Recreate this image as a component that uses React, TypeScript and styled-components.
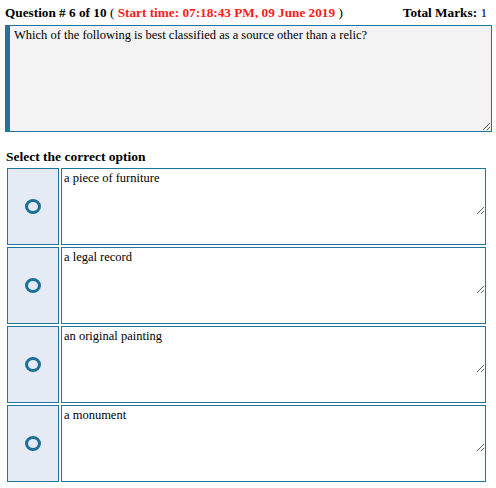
import React from "react";
import styled, { createGlobalStyle } from "styled-components";

const Global = createGlobalStyle`
  html, body { margin: 0; padding: 0; background: #ffffff; }
  body { font-family: "Liberation Serif", "Times New Roman", serif; color: #000; }
`;

const Page = styled.div`
  width: 496px;
  height: 488px;
  box-sizing: border-box;
  padding: 4px 4px 0 5px;
  display: flex;
  flex-direction: column;
`;

const HeaderRow = styled.div`
  display: flex;
  justify-content: space-between;
  align-items: baseline;
  font-weight: bold;
  font-size: 13.25px;
  line-height: 17px;
  height: 17px;
  padding-right: 5px;
  margin-bottom: 4px;
`;

const Red = styled.span`
  color: #ff1a1a;
`;

const Normal = styled.span`
  font-weight: normal;
`;

const QuestionBox = styled.textarea`
  display: block;
  box-sizing: border-box;
  width: 487px;
  height: 107px;
  margin: 0;
  padding: 1px 4px;
  border: 1px solid #21759b;
  border-left: 5px solid #21759b;
  background: #f3f3f3;
  font-family: "Liberation Serif", "Times New Roman", serif;
  font-size: 12.5px;
  line-height: 16px;
  color: #000;
  resize: vertical;
  outline: none;
`;

const SectionTitle = styled.div`
  font-weight: bold;
  font-size: 13.5px;
  line-height: 17px;
  margin: 16px 0 3px 1px;
`;

const OptionList = styled.div`
  display: flex;
  flex-direction: column;
  gap: 2px;
  padding-left: 2px;
`;

const OptionRow = styled.div`
  display: flex;
  gap: 2px;
  height: 77px;
`;

const RadioCell = styled.label`
  box-sizing: border-box;
  width: 52px;
  flex: none;
  border: 1.5px solid #21759b;
  background: #e4ebf5;
  display: flex;
  align-items: center;
  justify-content: center;
  cursor: pointer;
`;

const Ring = styled.span`
  box-sizing: border-box;
  width: 16px;
  height: 15px;
  margin-top: -1px;
  border-radius: 50%;
  border: 3.5px solid #1c6f98;
  background: transparent;
`;

const AnswerCell = styled.div`
  box-sizing: border-box;
  width: 425px;
  border: 1.5px solid #21759b;
  background: #fff;
`;

const AnswerText = styled.textarea`
  display: block;
  box-sizing: border-box;
  width: 100%;
  height: 46px;
  margin: 0;
  padding: 1px 2px;
  border: none;
  background: transparent;
  font-family: "Liberation Serif", "Times New Roman", serif;
  font-size: 12.5px;
  line-height: 16px;
  color: #000;
  resize: vertical;
  outline: none;
`;

const options = [
  "a piece of furniture",
  "a legal record",
  "an original painting",
  "a monument",
];

export default function App() {
  return (
    <>
      <Global />
      <Page>
        <HeaderRow>
          <span>
            Question # 6 of 10 <Normal>(</Normal>{" "}
            <Red>Start time: 07:18:43 PM, 09 June 2019</Red> <Normal>)</Normal>
          </span>
          <span>
            Total Marks: <Normal>1</Normal>
          </span>
        </HeaderRow>
        <QuestionBox
          readOnly
          defaultValue="Which of the following is best classified as a source other than a relic?"
        />
        <SectionTitle>Select the correct option</SectionTitle>
        <OptionList>
          {options.map((o) => (
            <OptionRow key={o}>
              <RadioCell>
                <Ring />
              </RadioCell>
              <AnswerCell>
                <AnswerText readOnly defaultValue={o} />
              </AnswerCell>
            </OptionRow>
          ))}
        </OptionList>
      </Page>
    </>
  );
}
